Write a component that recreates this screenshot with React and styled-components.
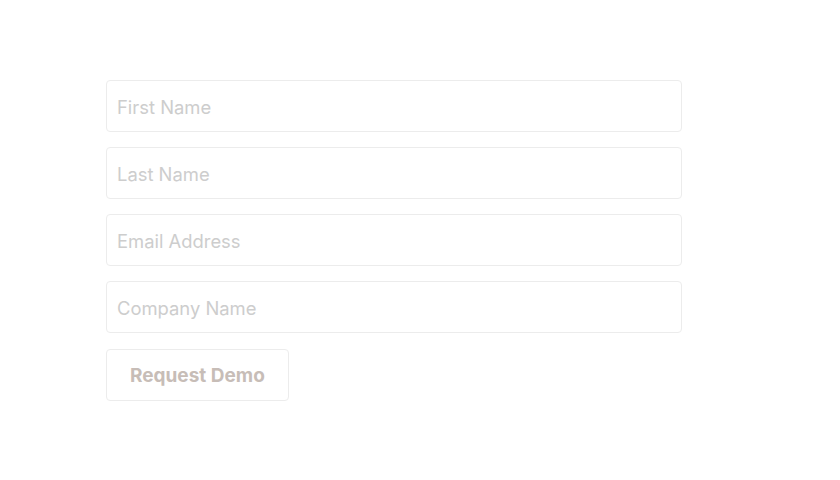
import React from "react";
import styled, { createGlobalStyle } from "styled-components";

const Global = createGlobalStyle`
  html, body { margin: 0; padding: 0; background: #ffffff; }
  body { font-family: Inter, "Noto Sans", sans-serif; }
  * { box-sizing: border-box; }
`;

const Page = styled.div`
  width: 840px;
  height: 480px;
  padding: 80px 0 0 106px;
`;

const Form = styled.form`
  display: flex;
  flex-direction: column;
  align-items: flex-start;
  gap: 15px;
  width: 576px;
`;

const Field = styled.input`
  width: 576px;
  height: 52px;
  border: 1px solid #ececec;
  border-radius: 4px;
  padding: 1px 10px 0;
  font-family: Inter, "Noto Sans", sans-serif;
  font-size: 18.4px;
  color: #cdcdcd;
  background: #ffffff;
  outline: none;
  &::placeholder { color: #cdcdcd; }
`;

const Button = styled.button`
  margin-top: 1px;
  height: 52px;
  padding: 1px 23px 0;
  border: 1px solid #ececec;
  border-radius: 4px;
  background: #ffffff;
  font-family: Inter, "Noto Sans", sans-serif;
  font-size: 19px;
  font-weight: 700;
  color: #c7bdb7;
  cursor: pointer;
`;

export default function App() {
  return (
    <Page>
      <Global />
      <Form onSubmit={(e) => e.preventDefault()}>
        <Field placeholder="First Name" />
        <Field placeholder="Last Name" />
        <Field placeholder="Email Address" />
        <Field placeholder="Company Name" />
        <Button type="submit">Request Demo</Button>
      </Form>
    </Page>
  );
}
